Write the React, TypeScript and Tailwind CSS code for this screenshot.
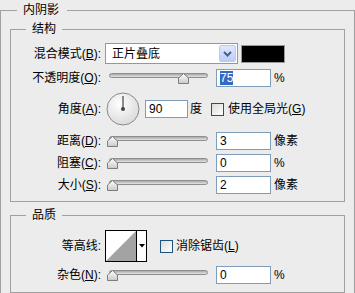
import React from 'react';

const FONT = "font-['Liberation_Sans','Noto_Sans_CJK_SC',sans-serif]";

function Key({ k }: { k: string }) {
  return (
    <>
      (<span className="underline underline-offset-1">{k}</span>)
    </>
  );
}

function Label({ text, k }: { text: string; k?: string }) {
  return (
    <div className="w-[90px] shrink-0 text-right whitespace-nowrap">
      {text}
      {k && <Key k={k} />}:
    </div>
  );
}

function Slider({ value }: { value: number }) {
  return (
    <div className="relative w-[107px] h-[18px] ml-[4px] shrink-0">
      <div className="absolute left-[4px] right-[4px] top-[4px] h-[5px] rounded-full border border-[#8e8e8e] bg-gradient-to-b from-[#a8a8a8] to-[#e4e4e4]" />
      <svg
        className="absolute top-[4px]"
        style={{ left: 2 + value * 0.94 }}
        width="11"
        height="11"
        viewBox="0 0 11 11"
      >
        <defs>
          <linearGradient id="thumb" x1="0" y1="0" x2="0" y2="1">
            <stop offset="0" stopColor="#ffffff" />
            <stop offset="1" stopColor="#c9c9c9" />
          </linearGradient>
        </defs>
        <path d="M5.5 0.5 L10.5 5 V10.5 H0.5 V5 Z" fill="url(#thumb)" stroke="#7d7d7d" />
      </svg>
    </div>
  );
}

function NumInput({ value, w = 'w-[55px]', selected }: { value: string; w?: string; selected?: boolean }) {
  return (
    <div className={`${w} h-[18px] shrink-0 border border-[#7f9db9] bg-white pl-[3px] leading-[16px]`}>
      {selected ? <span className="bg-[#316ac5] text-white">{value}</span> : value}
    </div>
  );
}

function Checkbox() {
  return <div className="w-[13px] h-[13px] shrink-0 border border-[#1c5180] bg-gradient-to-br from-[#dcdcd7] to-white" />;
}

function SliderRow({
  label,
  k,
  value,
  text,
  unit,
  selected,
}: {
  label: string;
  k: string;
  value: number;
  text: string;
  unit: string;
  selected?: boolean;
}) {
  return (
    <div className="flex items-center h-[18px]">
      <Label text={label} k={k} />
      <Slider value={value} />
      <div className="ml-[4px]">
        <NumInput value={text} selected={selected} />
      </div>
      <span className="ml-[3px]">{unit}</span>
    </div>
  );
}

export default function App() {
  return (
    <div className={`w-[355px] h-[293px] overflow-hidden bg-[#ececec] text-[12px] leading-[16px] text-black ${FONT}`}>
      <fieldset className="mt-[2px] w-[355px] border border-[#a0a0a0] px-[9px] pt-[3px] pb-[20px]">
        <legend className="ml-[7px] pl-[6px] pr-[8px] h-[16px]">内阴影</legend>

        <fieldset className="border border-[#a0a0a0] pt-[6px] pb-[7px]">
          <legend className="ml-[15px] px-[6px] h-[16px]">结构</legend>

          <div className="flex items-center h-[21px]">
            <Label text="混合模式" k="B" />
            <div className="ml-[4px] w-[133px] h-[21px] border border-[#7f9db9] bg-white flex items-center justify-between pl-[6px] pr-[1px]">
              <span>正片叠底</span>
              <div className="w-[17px] h-[17px] rounded-[2px] border border-[#b5cbf5] bg-gradient-to-b from-[#dfe8fd] to-[#b9cdf8] flex items-center justify-center">
                <svg width="9" height="6" viewBox="0 0 9 6">
                  <path d="M1 1 L4.5 4.5 L8 1" fill="none" stroke="#4d6185" strokeWidth="2" />
                </svg>
              </div>
            </div>
            <div className="ml-[3px] w-[44px] h-[18px] border border-[#9a9a9a] bg-black" />
          </div>

          <div className="mt-[5px]">
            <SliderRow label="不透明度" k="O" value={75} text="75" unit="%" selected />
          </div>

          <div className="mt-[5px] flex items-center h-[34px]">
            <Label text="角度" k="A" />
            <svg className="ml-[5px] shrink-0" width="34" height="34" viewBox="0 0 34 34">
              <defs>
                <radialGradient id="dial" cx="0.4" cy="0.35" r="0.75">
                  <stop offset="0" stopColor="#ffffff" />
                  <stop offset="1" stopColor="#d6d6d6" />
                </radialGradient>
              </defs>
              <circle cx="17" cy="17" r="16" fill="url(#dial)" stroke="#8a8a8a" />
              <line x1="17" y1="4" x2="17" y2="17" stroke="#444" strokeWidth="1.2" />
              <circle cx="17" cy="17" r="2" fill="#444" />
            </svg>
            <div className="ml-[5px]">
              <NumInput value="90" w="w-[43px]" />
            </div>
            <span className="ml-[2px]">度</span>
            <div className="ml-[9px]">
              <Checkbox />
            </div>
            <span className="ml-[4px] whitespace-nowrap">
              使用全局光
              <Key k="G" />
            </span>
          </div>

          <div className="mt-[6px] flex flex-col gap-[4px]">
            <SliderRow label="距离" k="D" value={0} text="3" unit="像素" />
            <SliderRow label="阻塞" k="C" value={0} text="0" unit="%" />
            <SliderRow label="大小" k="S" value={0} text="2" unit="像素" />
          </div>
        </fieldset>

        <fieldset className="mt-[5px] border border-[#a0a0a0] pt-[7px] pb-[8px]">
          <legend className="ml-[15px] px-[6px] h-[16px]">品质</legend>

          <div className="flex items-center h-[32px]">
            <Label text="等高线" />
            <div className="ml-[4px] w-[42px] h-[32px] border border-black bg-white flex shrink-0">
              <svg width="30" height="30" viewBox="0 0 30 30" className="shrink-0">
                <path d="M0 30 L30 0 L30 30 Z" fill="#a3a3a3" />
              </svg>
              <div className="w-px bg-black" />
              <div className="flex-1 flex items-center justify-center">
                <svg width="6" height="4" viewBox="0 0 6 4">
                  <path d="M0 0 H6 L3 3.5 Z" fill="#000" />
                </svg>
              </div>
            </div>
            <div className="ml-[13px]">
              <Checkbox />
            </div>
            <span className="ml-[3px] whitespace-nowrap">
              消除锯齿
              <Key k="L" />
            </span>
          </div>

          <div className="mt-[4px]">
            <SliderRow label="杂色" k="N" value={0} text="0" unit="%" />
          </div>
        </fieldset>
      </fieldset>
    </div>
  );
}
